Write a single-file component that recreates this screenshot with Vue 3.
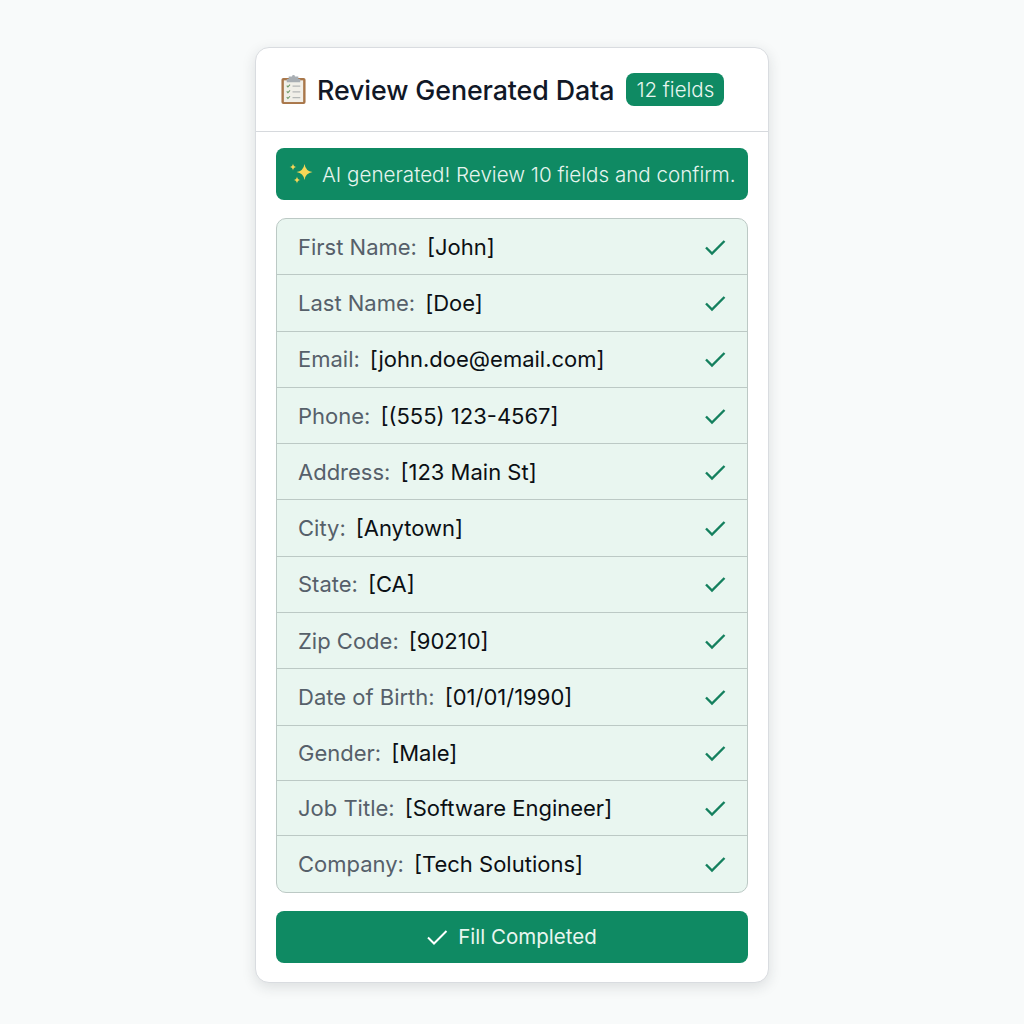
<template>
  <div class="page">
    <div class="card">
      <div class="card-header">
        <svg class="clipboard" width="27" height="31" viewBox="0 0 28 32">
          <rect x="1.5" y="4" width="25" height="27" rx="2" fill="#a9774a" />
          <rect x="4" y="6.5" width="20" height="22.5" fill="#f1efe8" />
          <path d="M9 2.5h3.5a1.5 1.5 0 0 1 3 0H19v2.5h2v3.5H7V5h2z" fill="#a8aeb3" />
          <path d="M7 12l1.2 1.3L10.4 11M7 18l1.2 1.3L10.4 17M7 24l1.2 1.3L10.4 23" fill="none" stroke="#6f9a6a" stroke-width="1.1" />
          <path d="M13 12.5h8M13 18.5h8M13 24.5h8" stroke="#b5b8b6" stroke-width="1.4" />
        </svg>
        <h2 class="title">Review Generated Data</h2>
        <span class="count">12 fields</span>
      </div>

      <div class="card-body">
        <div class="banner">
          <svg class="sparkles" width="26" height="26" viewBox="0 0 26 26">
            <path d="M16.5 3Q17.5 10 24.5 11Q17.5 12 16.5 19Q15.5 12 8.5 11Q15.5 10 16.5 3z" fill="#f5d657" />
            <path d="M5 2.5Q5.4 5.6 8.5 6Q5.4 6.4 5 9.5Q4.6 6.4 1.5 6Q4.6 5.6 5 2.5z" fill="#f5d657" />
            <path d="M9 15.5Q9.4 18.6 12.5 19Q9.4 19.4 9 22.5Q8.6 19.4 5.5 19Q8.6 18.6 9 15.5z" fill="#f5d657" />
          </svg>
          <span>AI generated! Review 10 fields and confirm.</span>
        </div>

        <ul class="fields">
          <li v-for="field in fields" :key="field.label" class="field">
            <span class="label">{{ field.label }}:</span>
            <span class="value">[{{ field.value }}]</span>
            <svg class="check" width="24" height="24" viewBox="0 0 24 24" fill="none" stroke="#14805e" stroke-width="2.4">
              <path d="M3 12.5l6 6L21.5 6" />
            </svg>
          </li>
        </ul>

        <button class="fill-btn">
          <svg width="24" height="24" viewBox="0 0 24 24" fill="none" stroke="#fff" stroke-width="2">
            <path d="M3 12.5l6 6L21.5 6" />
          </svg>
          Fill Completed
        </button>
      </div>
    </div>
  </div>
</template>

<script setup>
const fields = [
  { label: 'First Name', value: 'John' },
  { label: 'Last Name', value: 'Doe' },
  { label: 'Email', value: 'john.doe@email.com' },
  { label: 'Phone', value: '(555) 123-4567' },
  { label: 'Address', value: '123 Main St' },
  { label: 'City', value: 'Anytown' },
  { label: 'State', value: 'CA' },
  { label: 'Zip Code', value: '90210' },
  { label: 'Date of Birth', value: '01/01/1990' },
  { label: 'Gender', value: 'Male' },
  { label: 'Job Title', value: 'Software Engineer' },
  { label: 'Company', value: 'Tech Solutions' }
]
</script>

<style scoped>
.page {
  min-height: 1024px;
  box-sizing: border-box;
  padding-top: 47px;
  display: flex;
  justify-content: center;
  background: #f8fafa;
  font-family: Inter, "Liberation Sans", sans-serif;
}

.card {
  width: 514px;
  height: 936px;
  box-sizing: border-box;
  background: #fff;
  border: 1px solid #d9dce0;
  border-radius: 14px;
  box-shadow: 0 4px 14px rgba(30, 40, 50, 0.13);
}

.card-header {
  height: 84px;
  box-sizing: border-box;
  display: flex;
  align-items: center;
  padding: 0 20px 0 24px;
  border-bottom: 1px solid #d6d9dd;
}

.clipboard {
  margin-right: 10px;
}

.title {
  margin: 0;
  font-size: 26.8px;
  font-weight: 500;
  color: #111827;
  letter-spacing: -0.1px;
}

.count {
  margin-left: 12px;
  padding: 0 10px;
  height: 33px;
  line-height: 33px;
  background: #0f8a63;
  color: #e8f6f0;
  font-size: 20.5px;
  font-weight: 300;
  border-radius: 8px;
}

.card-body {
  padding: 16px 20px 0;
}

.banner {
  height: 52px;
  display: flex;
  align-items: center;
  gap: 8px;
  padding-left: 12px;
  background: #0f8a63;
  color: #e6f5ef;
  font-size: 20.6px;
  font-weight: 300;
  border-radius: 8px;
}

.fields {
  list-style: none;
  margin: 18px 0;
  padding: 0;
  background: #e9f6f0;
  border: 1px solid #bcc9c5;
  border-radius: 10px;
}

.field {
  height: 56.3px;
  box-sizing: border-box;
  display: flex;
  align-items: center;
  padding: 0 20px 0 21px;
  font-size: 22px;
  border-bottom: 1px solid #bcc9c5;
}

/* bottom rows are a touch shorter */
.field:nth-child(n+10) {
  height: 55.4px;
}

.field:last-child {
  border-bottom: none;
}

.label {
  color: #56606a;
  margin-right: 10px;
}

.value {
  color: #0b0f14;
}

.check {
  margin-left: auto;
}

.fill-btn {
  width: 100%;
  height: 52px;
  display: flex;
  align-items: center;
  justify-content: center;
  gap: 9px;
  padding-right: 8px;
  background: #0f8a63;
  color: #e8f6f0;
  border: none;
  border-radius: 8px;
  font-family: inherit;
  font-size: 20.5px;
}
</style>
